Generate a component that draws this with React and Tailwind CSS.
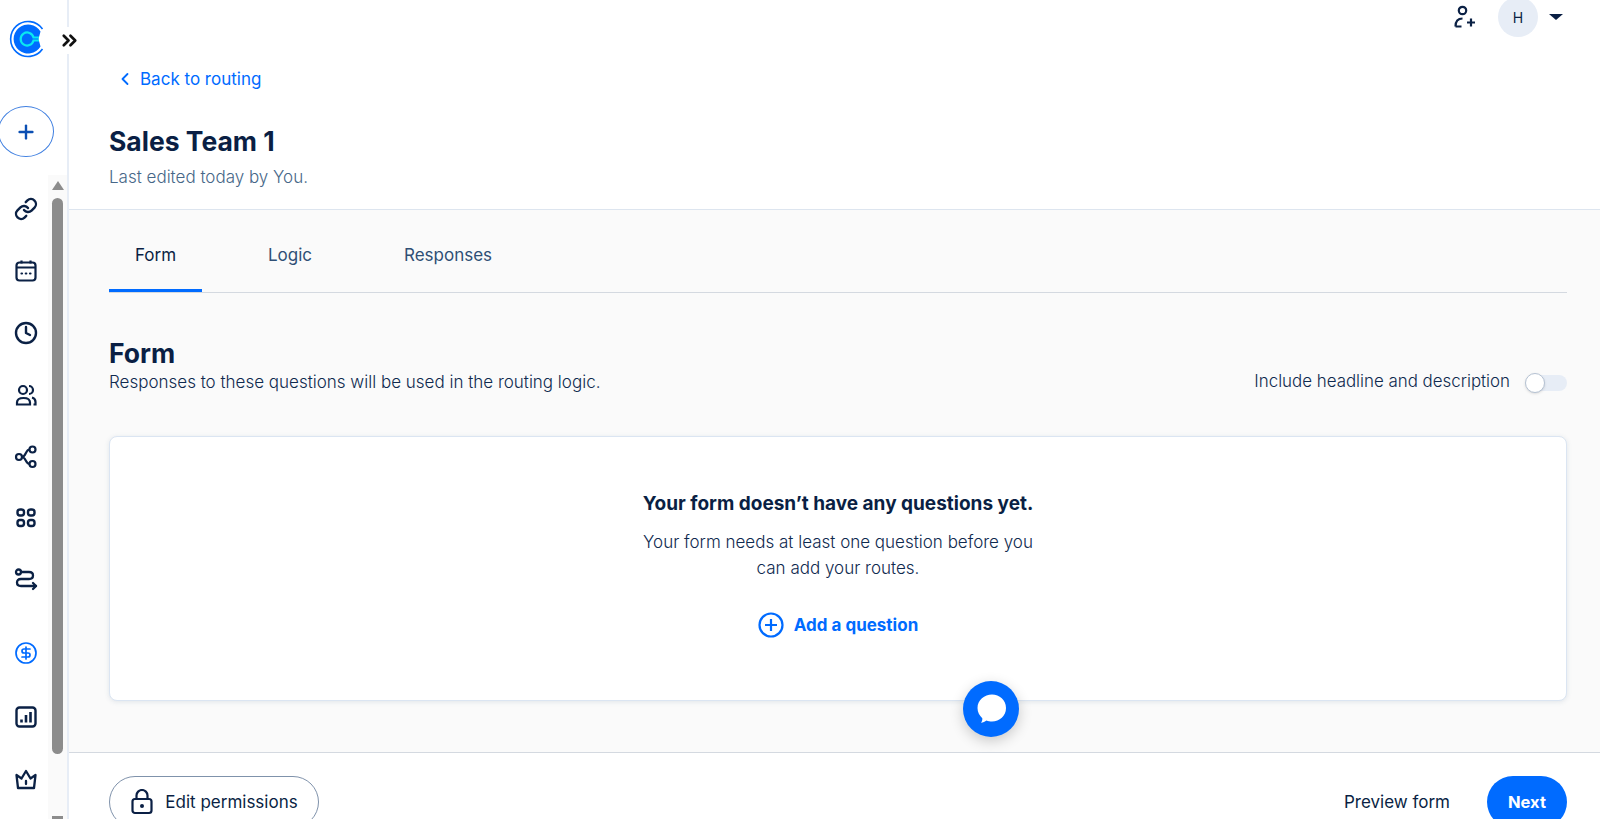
import { ChevronLeft, ChevronsRight, Plus, Link, Clock, CircleDollarSign } from 'lucide-react';

const NAVY = '#0b2145';

const Logo = () => (
    <svg width="38" height="38" viewBox="0 0 38 38" fill="none" className="shrink-0">
        <path d="M33.500 9 A17.500 17.500 0 1 0 33.500 29" stroke="#006bff" strokeWidth="1.600" />
        <path d="M31.500 11.500 A14.500 14.500 0 1 0 31.500 26.500 L29.500 19 Z" fill="#006bff" />
        <path d="M30 17.500 H24.500 A6.500 6.500 0 1 0 24.500 20.500 H30" stroke="#0ae8f0" strokeWidth="2.200" />
    </svg>
);

const CalendarIcon = () => (
    <svg width="24" height="24" viewBox="0 0 24 24" fill="none" stroke={NAVY} strokeWidth="2.200">
        <rect x="2.500" y="3.500" width="19" height="18" rx="3" />
        <path d="M2.500 8.500h19M7.500 1.500v3M16.500 1.500v3" />
        <path d="M7.500 14.500h.5M11.800 14.500h.5M16 14.500h.5" strokeLinecap="round" />
    </svg>
);

const PeopleIcon = () => (
    <svg width="24" height="24" viewBox="0 0 24 24" fill="none" stroke={NAVY} strokeWidth="2.200">
        <circle cx="9" cy="7" r="4" />
        <path d="M3 21.500v-2C3 16.500 6 15 9.500 15s6.500 1.500 6.500 4.500v2Z" />
        <path d="M15 3a4 4 0 0 1 0 8M18 14.500c2 .5 3.500 2.500 3.500 4.500v2.500h-2" />
    </svg>
);

const ShareIcon = () => (
    <svg width="24" height="24" viewBox="0 0 24 24" fill="none" stroke={NAVY} strokeWidth="2.200">
        <circle cx="5" cy="12" r="3" />
        <circle cx="18.500" cy="4.500" r="3" />
        <circle cx="18.500" cy="19" r="3" />
        <path d="M15.500 4.500c-4 0-3.500 7.500-7.500 7.500 4 0 3.500 7 7.500 7" />
    </svg>
);

const GridIcon = () => (
    <svg width="24" height="24" viewBox="0 0 24 24" fill="none" stroke={NAVY} strokeWidth="2.400">
        <rect x="3.500" y="3.500" width="6.500" height="6" rx="2.500" />
        <rect x="14" y="3.500" width="6.500" height="6" rx="2.500" />
        <rect x="3.500" y="14" width="6.500" height="6" rx="2.500" />
        <rect x="14" y="14" width="6.500" height="6" rx="2.500" />
    </svg>
);

const RouteIcon = () => (
    <svg width="24" height="24" viewBox="0 0 24 24" fill="none" stroke={NAVY} strokeWidth="2.300" strokeLinecap="round" strokeLinejoin="round">
        <circle cx="4.500" cy="4" r="2.500" />
        <path d="M7 4h8c3 0 4 1.500 4 3.500S17.500 11 15 11H7c-3 0-4 1.500-4 3.500S4.500 18 7 18h15" />
        <path d="M19 15l3 3-3 3" />
    </svg>
);

const ChartIcon = () => (
    <svg width="24" height="24" viewBox="0 0 24 24" fill="none" stroke={NAVY} strokeWidth="2.400">
        <rect x="2.500" y="2.500" width="19" height="19" rx="3" />
        <path d="M7.500 17.500v-3M12 17.500V10M16.500 17.500V7" strokeWidth="2.600" />
    </svg>
);

const CrownIcon = () => (
    <svg width="24" height="24" viewBox="0 0 24 24" fill="none" stroke={NAVY} strokeWidth="2.300" strokeLinejoin="round">
        <path d="M2.500 8 7.500 11.500 12 4l4.500 7.500L21.500 8l-1.500 13H4Z" />
        <path d="M12 14v3" strokeLinecap="round" />
    </svg>
);

const UserPlusIcon = () => (
    <svg width="24" height="24" viewBox="0 0 24 24" fill="none" stroke={NAVY} strokeWidth="2.200">
        <circle cx="9.500" cy="5.500" r="3.700" />
        <path d="M2.500 21.500c0-5 2.500-8 7-8M2.500 21.500h6M14 17.500h8M18 13.500v8" />
    </svg>
);

const LockIcon = () => (
    <svg width="24" height="26" viewBox="0 0 24 26" fill="none" stroke="#0a1f44" strokeWidth="2.200">
        <rect x="2.500" y="10" width="19" height="14" rx="2.500" />
        <path d="M6.500 10V6.500a5.500 5.500 0 0 1 11 0V10" />
        <circle cx="12" cy="17" r="2" fill="#0a1f44" stroke="none" />
    </svg>
);

const navIcons = [
    { id: 'link', node: <Link size={24} strokeWidth={2.400} color={NAVY} /> },
    { id: 'calendar', node: <CalendarIcon /> },
    { id: 'clock', node: <Clock size={24} strokeWidth={2.400} color={NAVY} /> },
    { id: 'people', node: <PeopleIcon /> },
    { id: 'share', node: <ShareIcon /> },
    { id: 'grid', node: <GridIcon /> },
    { id: 'route', node: <RouteIcon /> },
    { id: 'dollar', node: <CircleDollarSign size={24} strokeWidth={1.700} color="#006bff" />, gap: 'mt-[11px]' },
    { id: 'chart', node: <ChartIcon />, gap: 'mt-[2px]' },
    { id: 'crown', node: <CrownIcon /> },
];

const Sidebar = () => (
    <aside className="relative z-10 flex h-full w-[69px] shrink-0 flex-col border-r-2 border-[#e7edf6] bg-white">
        <div className="flex h-[106px] shrink-0 items-start pl-[9px] pt-[20px]">
            <Logo />
        </div>
        <div className="absolute left-[58px] top-[27px] bg-white py-[2px]">
            <ChevronsRight size={23} strokeWidth={2.800} color="#111" />
        </div>
        <button className="ml-[-2px] flex h-[51px] w-[56px] shrink-0 items-center justify-center rounded-[50%] border border-[#3f7fe0] bg-white">
            <Plus size={22} strokeWidth={2.600} color="#0b4fb3" />
        </button>
        <div className="relative mt-[18px] flex-1">
            <div className="absolute bottom-0 left-[48px] top-0 w-[19px] bg-[#fafafa]" />
            <nav className="absolute left-0 top-[3px] flex w-[52px] flex-col items-center">
                {navIcons.map((item) => (
                    <div key={item.id} className={`flex h-[61.900px] w-full shrink-0 items-center justify-center ${item.gap || ''}`}>
                        {item.node}
                    </div>
                ))}
            </nav>
            <div className="absolute left-[52px] top-[6px] h-0 w-0 border-x-[6px] border-b-[9px] border-x-transparent border-b-[#8c8c8c]" />
            <div className="absolute left-[52px] top-[23px] h-[556px] w-[11px] rounded-full bg-[#8c8c8c]" />
            <div className="absolute left-[52px] top-[641px] h-[4px] w-[11px] bg-[#8c8c8c]" />
        </div>
    </aside>
);

const Tab = ({ label, active, className }) => (
    <div className={`flex h-[82px] items-center justify-center border-b-[3px] pt-[12px] ${active ? 'border-[#006bff] text-[#0a1f44]' : 'border-transparent text-[#2f4f75]'} ${className}`}>
        {label}
    </div>
);

const App = () => {
    return (
        <div className="relative flex h-[819px] w-[1600px] overflow-hidden bg-white font-['Inter','Liberation_Sans',sans-serif] text-[#0a1f44]">
            <Sidebar />

            <main className="flex h-full min-w-0 flex-1 flex-col">
                {/* Top header */}
                <header className="relative h-[210px] shrink-0 border-b border-[#dde5ef] bg-white pl-[40px]">
                    <div className="absolute right-[37px] top-[-3px] flex items-center">
                        <UserPlusIcon />
                        <div className="ml-[21px] flex h-[40px] w-[40px] items-center justify-center rounded-full bg-[#e7edf6] text-[14px]">H</div>
                        <div className="ml-[11px] h-0 w-0 border-x-[7px] border-t-[6px] border-x-transparent border-t-[#0a1f44]" />
                    </div>
                    <a className="flex items-center pt-[69px] text-[17px] leading-[20px] text-[#006bff]">
                        <ChevronLeft size={20} strokeWidth={2.200} className="mr-[11px] translate-x-[6px]" />
                        Back to routing
                    </a>
                    <h1 className="mt-[36px] text-[26.500px] font-bold leading-[32px]">Sales Team 1</h1>
                    <p className="mt-[10px] text-[17px] font-light leading-[20px] text-[#476788]">Last edited today by You.</p>
                </header>

                <section className="flex min-h-0 flex-1 flex-col bg-[#fafafa] pl-[40px] pr-[33px]">
                    {/* Tabs */}
                    <div className="flex shrink-0 border-b border-[#d4d9e0] text-[17px]">
                        <Tab label="Form" active className="w-[93px]" />
                        <Tab label="Logic" className="ml-[66px] w-[44px]" />
                        <Tab label="Responses" className="ml-[92px] w-[88px]" />
                    </div>

                    {/* Form heading */}
                    <div className="mt-[44px] flex items-end justify-between">
                        <div>
                            <h2 className="text-[26.500px] font-bold leading-[32px]">Form</h2>
                            <p className="mt-[1px] text-[17px] font-light leading-[24px] text-[#0f2a4f]">Responses to these questions will be used in the routing logic.</p>
                        </div>
                        <div className="flex items-center pb-[1px]">
                            <span className="text-[16.900px] font-light leading-[24px] text-[#0f2a4f]">Include headline and description</span>
                            <div className="relative ml-[16px] mt-[4px] h-[16px] w-[41px] rounded-full bg-[#e7edf6]">
                                <div className="absolute left-[-1px] top-[-2px] h-[20px] w-[20px] rounded-full border border-[#b5c2d3] bg-white shadow-sm" />
                            </div>
                        </div>
                    </div>

                    {/* Empty state card */}
                    <div className="mt-[42px] flex h-[265px] shrink-0 flex-col items-center rounded-[8px] border border-[#dbe5f2] bg-white pt-[54px] shadow-[0_1px_5px_rgba(71,103,136,0.14)]">
                        <h3 className="text-[19px] font-bold leading-[26px]">Your form doesn’t have any questions yet.</h3>
                        <p className="mt-[13px] w-[410px] text-center text-[17px] font-light leading-[25.500px] text-[#0f2a4f]">
                            Your form needs at least one question before you can add your routes.
                        </p>
                        <button className="mt-[30px] flex items-center text-[17px] font-bold text-[#006bff]">
                            <svg width="26" height="26" viewBox="0 0 26 26" fill="none" stroke="#006bff" strokeWidth="2.200" className="mr-[10px]">
                                <circle cx="13" cy="13" r="11.500" />
                                <path d="M13 7v12M7 13h12" />
                            </svg>
                            <span className="pt-[2px]">Add a question</span>
                        </button>
                    </div>
                </section>

                {/* Footer */}
                <footer className="flex h-[67px] shrink-0 items-start justify-between border-t border-[#d4d9e0] bg-white pl-[40px] pr-[33px] pt-[23px]">
                    <button className="flex h-[52px] w-[210px] items-center justify-center rounded-full border border-[#7f92ab] text-[17px]">
                        <LockIcon />
                        <span className="ml-[11px] pt-[2px]">Edit permissions</span>
                    </button>
                    <div className="flex items-center">
                        <span className="pt-[2px] text-[17px]">Preview form</span>
                        <button className="ml-[37px] h-[52px] w-[80px] rounded-full bg-[#006bff] text-[16.500px] font-bold text-white">Next</button>
                    </div>
                </footer>
            </main>

            {/* Floating chat button */}
            <button className="absolute left-[963px] top-[681px] z-10 flex h-[56px] w-[56px] items-center justify-center rounded-full bg-[#006bff] shadow-[0_4px_14px_rgba(0,0,0,0.2)]">
                <svg width="32" height="32" viewBox="0 0 32 32" fill="white" className="shrink-0">
                    <path d="M17 1.500c7.500 0 14 5.500 14 13.500s-6.500 13.500-14 13.500c-2 0-4-.4-5.500-1-1.500 1.300-3.500 2-5.500 2.200 1-1.300 1.500-2.800 1.300-4.500C4.500 22.700 2.500 19 2.500 15 2.500 7 9.500 1.500 17 1.500Z" />
                </svg>
            </button>
        </div>
    );
};

export default App;
